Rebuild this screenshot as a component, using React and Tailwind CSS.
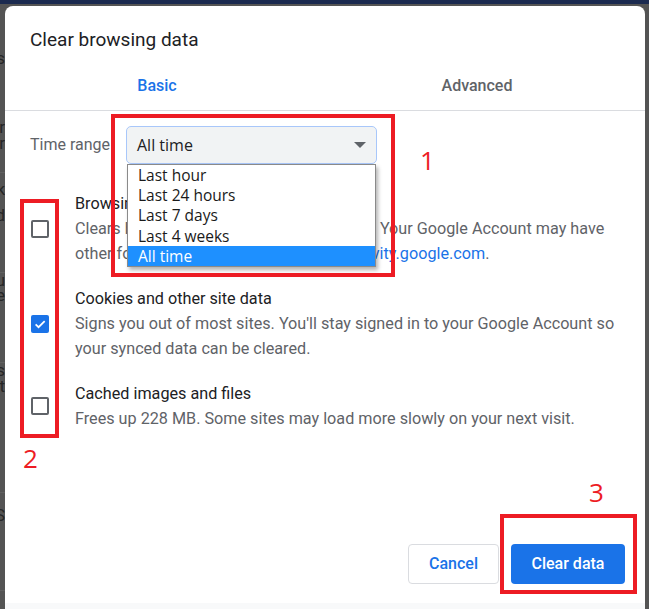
import React from "react";

const ROBOTO = { fontFamily: "Roboto, 'Liberation Sans', sans-serif" };

// bits of the page behind the dialog, peeking out on the left
const edgeBits = [
  { h: 46, t: "" },
  { h: 18, t: "s" },
  { h: 52, t: "" },
  { h: 16, t: "ur" },
  { h: 15, t: "ar" },
  { h: 22, t: "", line: true },
  { h: 34, t: "k" },
  { h: 18, t: "d" },
  { h: 48, t: "", line: true },
  { h: 16, t: "u" },
  { h: 14, t: "e" },
  { h: 60, t: "", line: true },
  { h: 16, t: "s" },
  { h: 16, t: "t" },
  { h: 98, t: "", line: true },
  { h: 46, t: "S" },
  { h: 52, t: "", line: true },
];

function Checkbox({ checked }) {
  if (checked) {
    return (
      <div className="w-[18px] h-[18px] rounded-[2px] bg-[#1a73e8] flex items-center justify-center">
        <svg width="14" height="14" viewBox="0 0 24 24" fill="none">
          <path d="M4.5 12.5l5 5L20 7" stroke="#fff" strokeWidth="3" />
        </svg>
      </div>
    );
  }
  return <div className="w-[18px] h-[18px] rounded-[2px] border-2 border-[#5f6368]" />;
}

function Item({ checked, title, children }) {
  return (
    <div className="flex items-center">
      <div className="w-[44px] shrink-0">
        <Checkbox checked={checked} />
      </div>
      <div className="text-[16.2px] leading-[25px] whitespace-nowrap">
        <div className="text-[#202124]">{title}</div>
        <div className="text-[#5f6368]">{children}</div>
      </div>
    </div>
  );
}

export default function App() {
  const ranges = ["Last hour", "Last 24 hours", "Last 7 days", "Last 4 weeks", "All time"];

  return (
    <div className="relative w-[649px] h-[609px] overflow-hidden bg-[#545454]" style={ROBOTO}>
      <div className="h-[4px] bg-[#1b2a4f]" />
      <div className="flex">
        {/* left edge of the page behind */}
        <div className="w-[5px] shrink-0 overflow-hidden flex flex-col">
          {edgeBits.map((b, i) => (
            <div
              key={i}
              className={`flex justify-end items-center whitespace-nowrap text-[17px] text-[#262626] ${b.line ? "border-b border-[#606060]" : ""}`}
              style={{ height: b.h }}
            >
              {b.t}
            </div>
          ))}
        </div>

        {/* dialog */}
        <div className="w-[640px] mt-[2px] h-[620px] bg-white rounded-t-[8px] overflow-hidden flex flex-col">
          <div className="pl-[25px] pt-[22px] text-[19px] leading-[24px] text-[#202124]">
            Clear browsing data
          </div>

          <div className="flex mt-[10px] -ml-[8px] h-[48px]">
            <div className="w-[320px] flex items-center justify-center text-[16px] font-medium text-[#1a73e8]">
              Basic
            </div>
            <div className="w-[320px] flex items-center justify-center text-[16px] font-medium text-[#5f6368]">
              Advanced
            </div>
          </div>
          <div className="h-px bg-[#dadce0]" />

          <div className="flex items-center mt-[15px] pl-[25px]">
            <div className="w-[96px] text-[16px] text-[#5f6368] whitespace-nowrap">Time range</div>
            <div
              className="w-[251px] h-[38px] rounded-[5px] bg-[#f1f3f4] border border-[#a8c7fa] flex items-center justify-between pl-[10px] pr-[10px] text-[16px] text-[#202124]"
              style={{ fontFamily: "'Open Sans', 'Noto Sans', sans-serif" }}
            >
              <span>All time</span>
              <svg width="12" height="6" viewBox="0 0 12 6">
                <path d="M0 0h12L6 6z" fill="#5f6368" />
              </svg>
            </div>
          </div>

          <div className="flex flex-col gap-[20px] mt-[27px] pl-[26px] pr-[20px]">
            <Item checked={false} title="Browsing history">
              Clears history, including in the search box. Your Google Account may have
              <br />
              other forms of browsing history at{" "}
              <span className="text-[#1a73e8]">myactivity.google.com</span>.
            </Item>
            <Item checked title="Cookies and other site data">
              Signs you out of most sites. You'll stay signed in to your Google Account so
              <br />
              your synced data can be cleared.
            </Item>
            <Item checked={false} title="Cached images and files">
              Frees up 228 MB. Some sites may load more slowly on your next visit.
            </Item>
          </div>

          <div className="flex justify-end gap-[12px] pr-[20px] mt-[113px]">
            <button className="w-[91px] h-[40px] rounded-[4px] border border-[#dadce0] bg-white text-[16px] font-medium text-[#1a73e8]">
              Cancel
            </button>
            <button className="w-[114px] h-[40px] rounded-[4px] bg-[#1a73e8] text-[16px] font-medium text-white">
              Clear data
            </button>
          </div>

          <div className="mt-[19px] flex-1 bg-[#f8f9fa]" />
        </div>

        <div className="flex-1" />
      </div>

      {/* open native dropdown */}
      <div
        className="absolute left-[127px] top-[164px] w-[249px] bg-white border border-[#8a8a8a] shadow-[2px_3px_4px_rgba(0,0,0,0.3)] text-[15.5px] text-[#1a1a1a]"
        style={{ fontFamily: "'Open Sans', 'Noto Sans', sans-serif" }}
      >
        {ranges.map((r) => (
          <div
            key={r}
            className={`h-[20.2px] leading-[20px] pl-[10px] ${r === "All time" ? "bg-[#1e90ff] text-white" : ""}`}
          >
            {r}
          </div>
        ))}
      </div>

      {/* red annotations */}
      <div className="absolute left-[111px] top-[114px] w-[284px] h-[163px] border-[4px] border-[#ed1c24]" />
      <div className="absolute left-[20px] top-[199px] w-[39px] h-[239px] border-[4px] border-[#ed1c24]" />
      <div className="absolute left-[500px] top-[514px] w-[137px] h-[80px] border-[4px] border-[#ed1c24]" />
      <div
        className="absolute left-[420px] top-[145px] text-[26px] leading-[30px] text-[#ed1c24]"
        style={{ fontFamily: "'Open Sans', sans-serif" }}
      >
        1
      </div>
      <div
        className="absolute left-[23px] top-[443px] text-[26px] leading-[30px] text-[#ed1c24]"
        style={{ fontFamily: "'Open Sans', sans-serif" }}
      >
        2
      </div>
      <div
        className="absolute left-[589px] top-[477px] text-[26px] leading-[30px] text-[#ed1c24]"
        style={{ fontFamily: "'Open Sans', sans-serif" }}
      >
        3
      </div>
    </div>
  );
}
